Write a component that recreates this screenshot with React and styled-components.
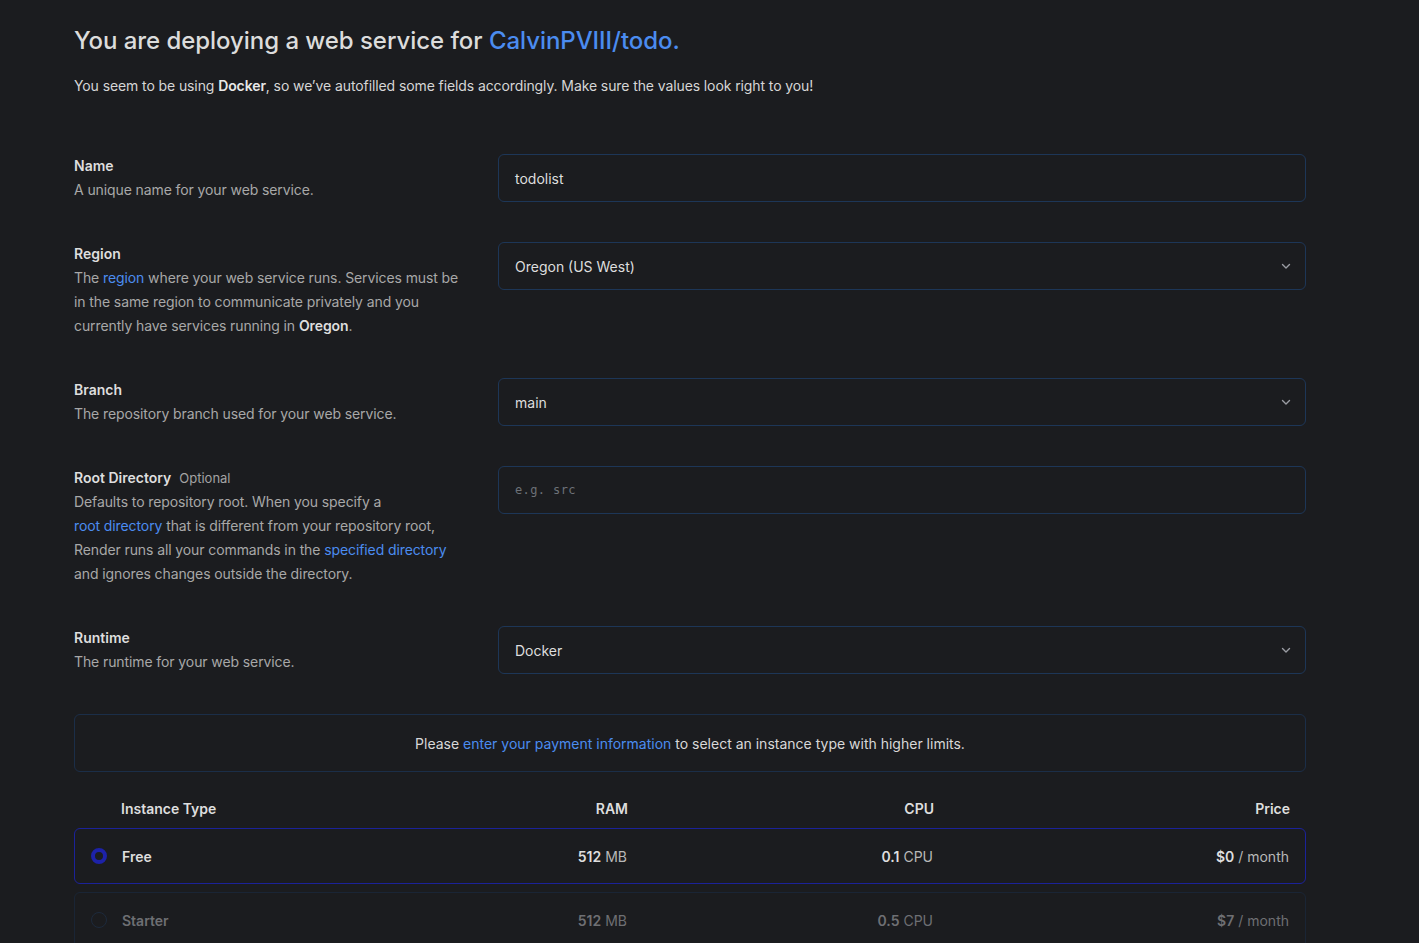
import styled, { createGlobalStyle } from 'styled-components';

const GlobalStyle = createGlobalStyle`
  body {
    margin: 0;
    background: #1b1c1f;
    font-family: Inter, "Noto Sans", sans-serif;
    color: #dedede;
  }
`;

const Page = styled.div`
  padding: 26px 113px 0 74px;
  min-height: 943px;
  box-sizing: border-box;
  overflow: hidden;
`;

const Title = styled.h1`
  margin: 0;
  font-size: 24px;
  line-height: 30px;
  font-weight: 500;
  color: #dcdcdc;
  letter-spacing: -0.05px;
`;

const Link = styled.a`
  color: #4b8cf0;
  text-decoration: none;
`;

const Intro = styled.p`
  margin: 20px 0 0;
  font-size: 14px;
  line-height: 20px;
  color: #d6d6d6;
  letter-spacing: -0.1px;
  b { font-weight: 600; color: #e8e8e8; }
`;

const Form = styled.div`
  margin-top: 58px;
  display: flex;
  flex-direction: column;
  gap: 40px;
`;

const Row = styled.div`
  display: grid;
  grid-template-columns: 400px 1fr;
  gap: 24px;
  align-items: start;
`;

const Label = styled.div`
  font-size: 14px;
  line-height: 24px;
  font-weight: 600;
  color: #dedede;
  span {
    font-weight: 400;
    font-size: 13px;
    color: #a3a3a3;
    margin-left: 8px;
  }
`;

const Desc = styled.div`
  max-width: 390px;
  font-size: 14px;
  line-height: 24px;
  color: #a8a8a8;
  letter-spacing: -0.1px;
  b { font-weight: 600; color: #dedede; }
`;

const Field = styled.div`
  height: 48px;
  box-sizing: border-box;
  border: 1px solid #1d3657;
  border-radius: 6px;
  display: flex;
  align-items: center;
  justify-content: space-between;
  padding: 0 13px 0 16px;
  font-size: 14px;
  color: #dedede;
  font-family: ${p => (p.$mono ? '"DejaVu Sans Mono", "Liberation Mono", monospace' : 'inherit')};
  ${p => p.$mono && 'font-size: 12px; color: #6d7178; letter-spacing: 0.4px;'}
`;

const Chevron = () => (
  <svg width="12" height="12" viewBox="0 0 12 12" fill="none">
    <path d="M2.5 4.5 6 8l3.5-3.5" stroke="#9a9ca3" strokeWidth="1.4" strokeLinecap="round" strokeLinejoin="round" />
  </svg>
);

const Notice = styled.div`
  height: 58px;
  box-sizing: border-box;
  border: 1px solid #1b2e48;
  border-radius: 6px;
  display: flex;
  align-items: center;
  justify-content: center;
  font-size: 14px;
  color: #d8d8d8;
`;

const Table = styled.div`
  display: flex;
  flex-direction: column;
  gap: 8px;
  margin-top: -24px;
`;

const Grid = styled.div`
  display: grid;
  grid-template-columns: 31px 1fr 200px 306px 356px;
  align-items: center;
  padding: 0 16px;
  box-sizing: border-box;
  font-size: 14px;
  & > :nth-child(n + 3) { text-align: right; }
`;

const Head = styled(Grid)`
  height: 40px;
  margin-bottom: -8px;
  font-weight: 600;
  color: #dedede;
`;

const Option = styled(Grid)`
  height: 56px;
  border: 1px solid ${p => (p.$active ? '#1b2299' : '#1a2535')};
  border-radius: 6px;
  color: ${p => (p.$active ? '#dedede' : '#6e6f73')};
  b { font-weight: 600; }
  span { color: ${p => (p.$active ? '#b8b8b8' : '#6e6f73')}; }
`;

const Radio = styled.div`
  width: 16px;
  height: 16px;
  box-sizing: border-box;
  border-radius: 50%;
  border: ${p => (p.$on ? '4px solid #1d22a8' : '1px solid #1d2a3c')};
`;

const Name = styled.div`
  font-weight: 600;
`;

const plans = [
  { name: 'Free', ram: '512', cpu: '0.1', price: '$0', active: true },
  { name: 'Starter', ram: '512', cpu: '0.5', price: '$7' },
];

export default function App() {
  return (
    <Page>
      <GlobalStyle />
      <Title>
        You are deploying a web service for <Link>CalvinPVIII/todo.</Link>
      </Title>
      <Intro>
        You seem to be using <b>Docker</b>, so we’ve autofilled some fields accordingly. Make sure the values look right to you!
      </Intro>
      <Form>
        <Row>
          <div>
            <Label>Name</Label>
            <Desc>A unique name for your web service.</Desc>
          </div>
          <Field>todolist</Field>
        </Row>
        <Row>
          <div>
            <Label>Region</Label>
            <Desc>
              The <Link>region</Link> where your web service runs. Services must be in the same region to communicate privately and you currently have services running in <b>Oregon</b>.
            </Desc>
          </div>
          <Field>Oregon (US West)<Chevron /></Field>
        </Row>
        <Row>
          <div>
            <Label>Branch</Label>
            <Desc>The repository branch used for your web service.</Desc>
          </div>
          <Field>main<Chevron /></Field>
        </Row>
        <Row>
          <div>
            <Label>Root Directory<span>Optional</span></Label>
            <Desc>
              Defaults to repository root. When you specify a<br />
              <Link>root directory</Link> that is different from your repository root, Render runs all your commands in the <Link>specified directory</Link> and ignores changes outside the directory.
            </Desc>
          </div>
          <Field $mono>e.g. src</Field>
        </Row>
        <Row>
          <div>
            <Label>Runtime</Label>
            <Desc>The runtime for your web service.</Desc>
          </div>
          <Field>Docker<Chevron /></Field>
        </Row>
        <Notice>
          Please&nbsp;<Link>enter your payment information</Link>&nbsp;to select an instance type with higher limits.
        </Notice>
        <Table>
          <Head>
            <div />
            <div>Instance Type</div>
            <div>RAM</div>
            <div>CPU</div>
            <div>Price</div>
          </Head>
          {plans.map(p => (
            <Option key={p.name} $active={p.active}>
              <Radio $on={p.active} />
              <Name>{p.name}</Name>
              <div><b>{p.ram}</b> <span>MB</span></div>
              <div><b>{p.cpu}</b> <span>CPU</span></div>
              <div><b>{p.price}</b> <span>/ month</span></div>
            </Option>
          ))}
        </Table>
      </Form>
    </Page>
  );
}
